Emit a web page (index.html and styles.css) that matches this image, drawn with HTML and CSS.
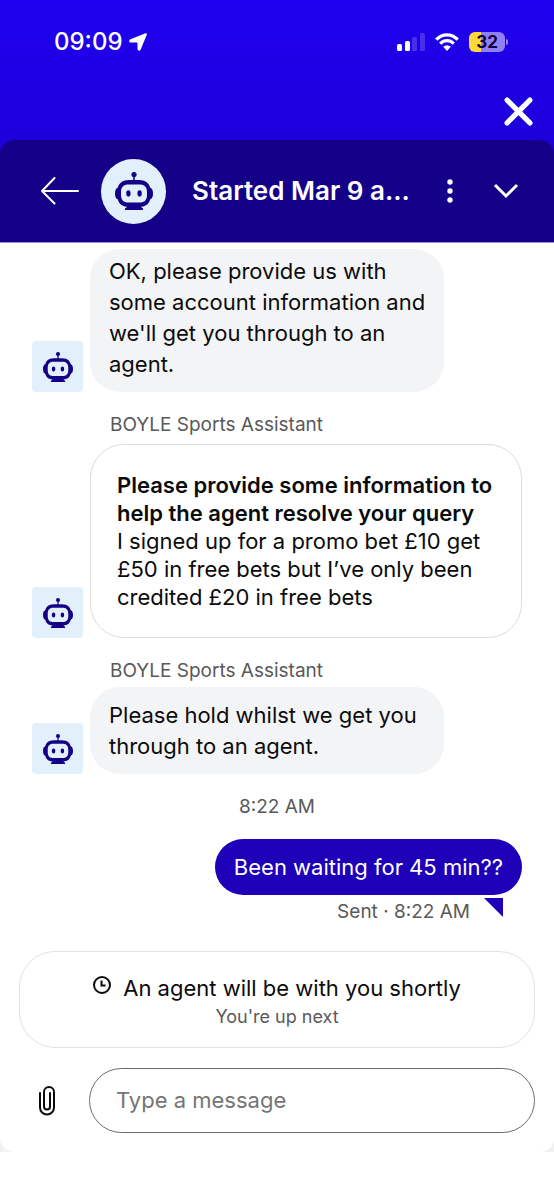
FILE: index.html
```html
<!DOCTYPE html>
<html lang="en">
<head>
<meta charset="utf-8">
<meta name="viewport" content="width=device-width, initial-scale=1">
<title>Chat</title>
<link rel="stylesheet" href="styles.css">
</head>
<body>
<svg class="sprite" aria-hidden="true">
  <symbol id="bot" viewBox="0 0 38 38">
    <circle cx="19" cy="2.600" r="2.600"/>
    <path d="M18.200 4h1.600v5h-1.600z"/>
    <path d="M4 15.500H3q-3 1-3 6t3 6h1zM34 15.500h1q3 1 3 6t-3 6h-1z"/>
    <path fill-rule="evenodd" d="M14 8h10c7.500 0 11.500 4 11.500 11v5c0 7-4 11-11.500 11H14C6.500 35 2.500 31 2.500 24v-5C2.500 12 6.500 8 14 8zm-.5 4.500c-5 0-7.500 2.500-7.500 7.500v3c0 5 2.500 7.500 7.500 7.500h11c5 0 7.500-2.500 7.500-7.500v-3c0-5-2.500-7.500-7.500-7.500z"/>
    <rect x="11.300" y="18.300" width="4.200" height="6.400" rx="2.100"/>
    <rect x="22.500" y="18.300" width="4.200" height="6.400" rx="2.100"/>
    <path d="M12 33h14v2l2 1.500V38H10v-1.500l2-1.500z"/>
  </symbol>
</svg>

<div class="hero">
  <div class="status">
    <div class="status-left">
      <span class="clock">09:09</span>
      <svg class="location" viewBox="0 0 18 18" aria-hidden="true"><path d="M16.500.2Q18.300-.2 17.800 1.700L11.600 16.700Q10.900 18.200 9.700 17.500 8.500 17 8.500 16V10.300Q8.500 9.500 7.700 9.500H2Q0 9.500 .1 8.200 .2 6.900 1.500 6.300z"/></svg>
    </div>
    <div class="status-right">
      <svg class="signal" viewBox="0 0 28 18" aria-hidden="true">
        <rect x="0" y="11" width="5" height="7" rx="1.500"/><rect x="8" y="8" width="5" height="10" rx="1.500"/>
        <g opacity=".18"><rect x="15" y="4" width="5" height="14" rx="1.500"/><rect x="23" y="0" width="5" height="18" rx="1.500"/></g>
      </svg>
      <svg class="wifi" viewBox="0 0 24 18" aria-hidden="true">
        <g fill="none" stroke="currentColor" stroke-width="3.200"><path d="M1.200 6.700Q6 1.800 12 1.800T22.800 6.700"/><path d="M5.200 10.600Q8.200 7.700 12 7.700T18.800 10.600"/></g>
        <path d="M8.200 13.800Q12 10.800 15.800 13.800L12.500 17.500Q12 18 11.500 17.500z"/>
      </svg>
      <span class="battery">32</span>
    </div>
  </div>
  <div class="close-row">
    <button class="icon-button" aria-label="Close">
      <svg class="close" viewBox="0 0 28 28" aria-hidden="true"><path d="M3 3l22 22M25 3L3 25"/></svg>
    </button>
  </div>
</div>

<main class="panel">
  <header class="header">
    <button class="icon-button" aria-label="Back">
      <svg class="back" viewBox="0 0 40 28" aria-hidden="true"><path d="M14.500 1L2 14l12.500 12.500M2 14h36"/></svg>
    </button>
    <span class="header-avatar"><svg viewBox="0 0 38 38" aria-hidden="true"><use href="#bot"/></svg></span>
    <h1 class="title">Started Mar 9 a...</h1>
    <button class="icon-button" aria-label="More options">
      <svg class="more" viewBox="0 0 6 24" aria-hidden="true"><circle cx="3" cy="3" r="2.700"/><circle cx="3" cy="12" r="2.700"/><circle cx="3" cy="21" r="2.700"/></svg>
    </button>
    <button class="icon-button" aria-label="Minimise">
      <svg class="chevron" viewBox="0 0 26 16" aria-hidden="true"><path d="M2 2l11 11L24 2"/></svg>
    </button>
  </header>

  <section class="messages">
    <article class="message">
      <span class="avatar"><svg viewBox="0 0 38 38" aria-hidden="true"><use href="#bot"/></svg></span>
      <p class="bubble bubble-first">OK, please provide us with some account information and we'll get you through to an agent.</p>
    </article>
    <p class="sender">BOYLE Sports Assistant</p>
    <article class="message">
      <span class="avatar"><svg viewBox="0 0 38 38" aria-hidden="true"><use href="#bot"/></svg></span>
      <div class="card">
        <h2 class="card-title">Please provide some information to help the agent resolve your query</h2>
        <p>I signed up for a promo bet £10 get £50 in free bets but I’ve only been credited £20 in free bets</p>
      </div>
    </article>
    <p class="sender">BOYLE Sports Assistant</p>
    <article class="message">
      <span class="avatar"><svg viewBox="0 0 38 38" aria-hidden="true"><use href="#bot"/></svg></span>
      <p class="bubble">Please hold whilst we get you through to an agent.</p>
    </article>
    <time class="timestamp">8:22 AM</time>
    <p class="outgoing">Been waiting for 45 min??</p>
    <div class="receipt"><span>Sent · 8:22 AM</span><span class="tail"></span></div>
  </section>

  <section class="notice">
    <p class="notice-main"><svg class="wait" viewBox="0 0 18 18" aria-hidden="true"><circle cx="9" cy="9" r="8"/><path d="M8.500 4.500v5h4"/></svg>An agent will be with you shortly</p>
    <p class="notice-sub">You're up next</p>
  </section>

  <form class="composer">
    <button class="icon-button" type="button" aria-label="Attach a file">
      <svg class="clip" viewBox="0 0 16 30" aria-hidden="true"><path d="M1 7v14.500a7 7 0 0 0 14 0V6A5 5 0 0 0 5 6v14.500a3 3 0 0 0 6 0V7"/></svg>
    </button>
    <input class="field" type="text" placeholder="Type a message" aria-label="Type a message">
  </form>
</main>
</body>
</html>
```
FILE: styles.css
```css
* { box-sizing: border-box; }

body, h1, h2, p { margin: 0; }

body {
  background: #fff;
  color: #0b0b0b;
  font-family: Inter, "Liberation Sans", sans-serif;
  font-size: 22px;
}

.sprite { position: absolute; width: 0; height: 0; }

svg { display: block; fill: currentColor; }

.icon-button {
  display: flex;
  flex: none;
  padding: 0;
  border: 0;
  background: none;
  color: inherit;
  cursor: pointer;
}

.hero {
  padding: 25px 21px 14px 54px;
  background: linear-gradient(#1f00ef, #1e00dc);
  color: #fff;
}

.status { display: flex; justify-content: space-between; height: 34px; align-items: center; padding-right: 28px; }
.status-left { display: flex; align-items: center; gap: 6px; }
.status-right { display: flex; align-items: center; gap: 10px; }
.clock { font-size: 24px; font-weight: 500; line-height: 34px; }
.location { width: 18px; height: 18px; }
.signal { width: 28px; height: 18px; }
.wifi { width: 24px; height: 18px; }

.battery {
  position: relative;
  width: 36px;
  border-radius: 6px;
  background: linear-gradient(90deg, #ffd83a 12px, #9180f3 12px);
  color: #10003c;
  font-size: 17px;
  font-weight: 700;
  line-height: 20px;
  text-align: center;
}

.battery::after {
  content: "";
  position: absolute;
  top: 7px;
  right: -3px;
  width: 2px;
  height: 6px;
  border-radius: 0 2px 2px 0;
  background: #9180f3;
}

.close-row { display: flex; justify-content: flex-end; padding-top: 38px; }
.close { width: 29px; height: 29px; fill: none; stroke: currentColor; stroke-width: 5; stroke-linecap: round; }

.panel { background: linear-gradient(#1e00dc 24px, #fff 24px calc(100% - 24px), #f1f1f1 calc(100% - 24px)); }

.header {
  display: flex;
  align-items: center;
  height: 103px;
  padding: 0 35px 0 40px;
  border-bottom: 1px solid #9a8fdc;
  border-radius: 14px 14px 0 0;
  background: #150088;
  color: #fff;
}

.back { width: 40px; height: 28px; fill: none; stroke: currentColor; stroke-width: 2; stroke-linecap: round; stroke-linejoin: round; }

.header-avatar {
  display: flex;
  flex: none;
  align-items: center;
  justify-content: center;
  width: 65px;
  height: 65px;
  margin: 0 26px 0 21px;
  border-radius: 50%;
  background: #e2f0fc;
  color: #150088;
}

.header-avatar svg { width: 38px; height: 38px; }
.title { flex: 1; font-size: 26px; font-weight: 600; line-height: 36px; white-space: nowrap; }
.more { width: 6px; height: 24px; margin-right: 40px; }
.chevron { width: 26px; height: 16px; fill: none; stroke: currentColor; stroke-width: 3; }

.messages { display: flex; flex-direction: column; padding: 6px 32px 0; background: #fff; }
.message { display: flex; align-items: flex-end; gap: 7px; }

.avatar {
  display: flex;
  flex: none;
  align-items: center;
  justify-content: center;
  width: 51px;
  height: 51px;
  border-radius: 4px;
  background: #e2f0fc;
  color: #150088;
}

.avatar svg { width: 30px; height: 30px; }

.bubble {
  max-width: 354px;
  padding: 13px 14px 12px 19px;
  border-radius: 30px;
  background: #f3f4f6;
  line-height: 31px;
}

.bubble-first { padding-top: 7px; }
.sender { margin: 20px 0 6px 78px; color: #595959; font-size: 19px; line-height: 26px; }

.card {
  flex: 1;
  padding: 26px;
  border: 1px solid #dcdcdc;
  border-radius: 34px;
  line-height: 28px;
}

.card-title { font-size: 22px; font-weight: 600; line-height: 28px; }
.sender + .message .bubble { margin-top: -3px; }
.timestamp { margin: 20px 0; color: #595959; font-size: 19px; line-height: 25px; text-align: center; }

.outgoing {
  align-self: flex-end;
  padding: 13px 19px 12px;
  border-radius: 28px;
  background: #1d00b8;
  color: #fff;
  line-height: 31px;
}

.receipt {
  display: flex;
  justify-content: flex-end;
  gap: 14px;
  margin: 3px 19px 0 0;
  color: #595959;
  font-size: 19px;
  line-height: 28px;
}

.tail { width: 19px; height: 19px; background: #1d00b8; clip-path: polygon(0 0, 100% 0, 100% 100%); }

.notice {
  margin: 25px 19px 20px;
  padding: 21px 20px 17px;
  border: 1px solid #e2e2e2;
  border-radius: 36px;
  background: #fff;
  text-align: center;
}

.notice-main { display: flex; justify-content: center; gap: 12px; line-height: 30px; }
.wait { width: 18px; height: 18px; margin-top: 3px; fill: none; stroke: currentColor; stroke-width: 2; }
.notice-sub { color: #595959; font-size: 18px; line-height: 27px; }

.composer {
  display: flex;
  align-items: center;
  gap: 34px;
  padding: 0 19px 19px 39px;
  border-radius: 0 0 14px 14px;
  background: #fff;
}

.clip { width: 16px; height: 30px; fill: none; stroke: currentColor; stroke-width: 2; stroke-linecap: round; }

.field {
  flex: 1;
  min-width: 0;
  height: 65px;
  padding: 0 26px 2px;
  border: 1px solid #6b6b6b;
  border-radius: 33px;
  background: #fff;
  color: #0b0b0b;
  font: inherit;
}

.field::placeholder { color: #757575; opacity: 1; }
```
